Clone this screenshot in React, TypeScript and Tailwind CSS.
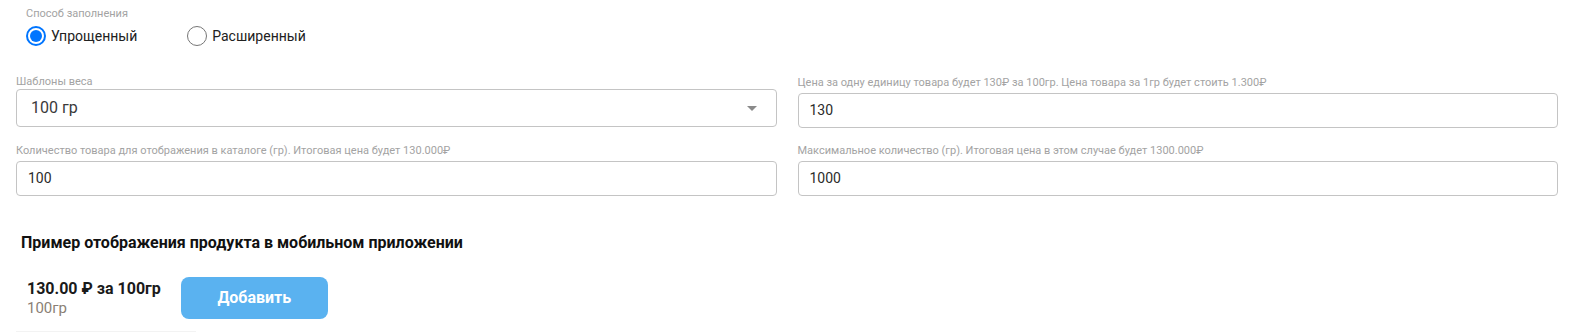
import React from 'react';

const font = { fontFamily: 'Roboto, "Noto Sans", sans-serif' };

function Radio({ label, checked }: { label: string; checked?: boolean }) {
  return (
    <label className="flex items-center gap-[5px] cursor-pointer">
      {checked ? (
        <span className="flex h-[20px] w-[20px] items-center justify-center rounded-full border-[2px] border-[#0075ff] bg-white">
          <span className="h-[12px] w-[12px] rounded-full bg-[#0075ff]" />
        </span>
      ) : (
        <span className="h-[20px] w-[20px] rounded-full border-[1.5px] border-[#767676] bg-white" />
      )}
      <span className="text-[14px] leading-[20px] text-[#212121]">{label}</span>
    </label>
  );
}

function Field({ label, value, top }: { label: string; value: string; top: string }) {
  return (
    <div className="flex flex-col">
      <span className={`text-[11px] leading-[12px] text-[#a3a3a3] ${top}`}>{label}</span>
      <div className="flex h-[35px] items-center rounded-[4px] border border-[#c4c4c4] px-[11px]">
        <span className="text-[14px] text-[#2b2b2b]">{value}</span>
      </div>
    </div>
  );
}

export default function App() {
  return (
    <div className="min-h-[334px] w-full bg-white pl-[16px] pr-[19px]" style={font}>
      {/* fill mode */}
      <div className="pl-[10px] pt-[7px]">
        <div className="text-[11px] leading-[13px] text-[#a3a3a3]">Способ заполнения</div>
        <div className="mt-[6px] flex items-center gap-[50px]">
          <Radio label="Упрощенный" checked />
          <Radio label="Расширенный" />
        </div>
      </div>

      <div className="mt-[30px] grid grid-cols-2 gap-x-[21px] gap-y-[15px]">
        <div className="flex flex-col">
          <span className="text-[11px] leading-[12px] text-[#a3a3a3]">Шаблоны веса</span>
          <div className="mt-[1px] flex h-[38px] items-center justify-between rounded-[4px] border border-[#c4c4c4] pl-[14px] pr-[19px]">
            <span className="text-[16px] text-[#3a3a3a]">100 гр</span>
            <svg width="10" height="5" viewBox="0 0 10 5">
              <path d="M0 0 L10 0 L5 5 Z" fill="#8a8a8a" />
            </svg>
          </div>
        </div>
        <Field
          label="Цена за одну единицу товара будет 130₽ за 100гр. Цена товара за 1гр будет стоить 1.300₽"
          value="130"
          top="mt-[1px] mb-[4px]"
        />

        <div className="mt-[2px]">
          <Field
            label="Количество товара для отображения в каталоге (гр). Итоговая цена будет 130.000₽"
            value="100"
            top="mb-[4px]"
          />
        </div>
        <div className="mt-[2px]">
          <Field
            label="Максимальное количество (гр). Итоговая цена в этом случае будет 1300.000₽"
            value="1000"
            top="mb-[4px]"
          />
        </div>
      </div>

      {/* mobile preview */}
      <div className="mt-[37px] pl-[5px] text-[16px] font-bold leading-[20px] text-[#111]">
        Пример отображения продукта в мобильном приложении
      </div>
      <div className="mt-[24px] flex items-center gap-[20px] pl-[11px]">
        <div className="flex flex-col whitespace-nowrap">
          <span className="text-[16px] font-bold leading-[20px] text-[#1a1a1a]">130.00 ₽ за 100гр</span>
          <span className="text-[15px] leading-[19px] text-[#8a7f75]">100гр</span>
        </div>
        <button className="flex h-[42px] w-[147px] shrink-0 items-center justify-center rounded-[8px] bg-[#5ab2f0] text-[16px] font-bold text-white">
          Добавить
        </button>
      </div>
      <div className="mt-[12px] h-px w-[180px] bg-[#f3f3f3]" />
    </div>
  );
}
